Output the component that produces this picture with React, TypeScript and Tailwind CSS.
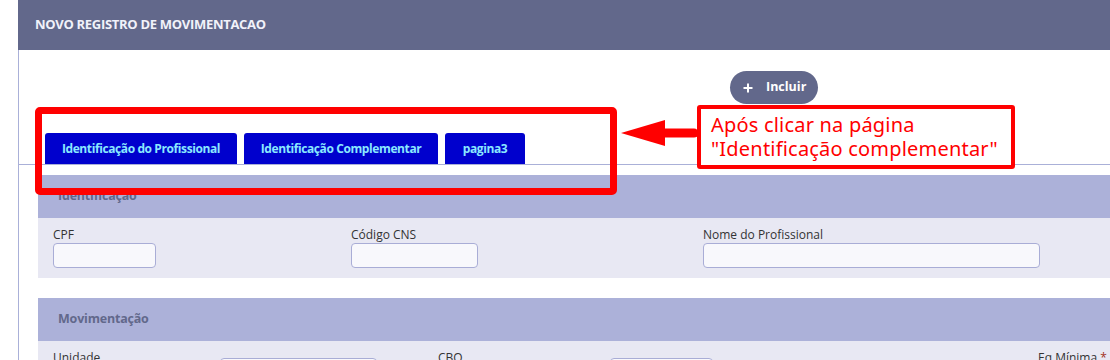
const identificacao = [
  { label: 'CPF', left: 'w-[298px]', input: 'w-[103px]' },
  { label: 'Código CNS', left: 'w-[352px]', input: 'w-[127px]' },
  { label: 'Nome do Profissional', left: 'w-[340px]', input: 'w-[337px]' },
]

const tabs = [
  { label: 'Identificação do Profissional', w: 'w-[192px]' },
  { label: 'Identificação Complementar', w: 'w-[194px]' },
  { label: 'pagina3', w: 'w-[80px]' },
]

export default function App() {
  return (
    <div className="relative h-[360px] w-[1110px] overflow-hidden bg-white font-['Open_Sans',sans-serif]">
      <div className="ml-[18px]">
        {/* Card header */}
        <div className="flex h-[50px] items-center bg-[#62688b] px-[17px]">
          <h1 className="text-[13px] font-bold tracking-[-0.3px] text-[#f1f2fa]">NOVO REGISTRO DE MOVIMENTACAO</h1>
        </div>

        <div className="h-[310px] border-l border-[#aab0d8]">
          {/* Incluir */}
          <div className="pt-[21px] pl-[711px]">
            <button className="flex h-[33px] w-[88px] items-center gap-[13px] rounded-full bg-[#62688b] pl-[13px] text-[12.5px] font-bold text-white">
              <svg viewBox="0 0 10 10" className="h-[10px] w-[10px]" aria-hidden="true">
                <path d="M5 0.5v9M0.5 5h9" stroke="white" strokeWidth="2" />
              </svg>
              Incluir
            </button>
          </div>

          {/* Tabs */}
          <div className="mt-[29px] flex gap-[7px] border-b border-[#aab0d8] pl-[26px]">
            {tabs.map((t) => (
              <div
                key={t.label}
                className={`flex h-[31px] ${t.w} items-center justify-center rounded-t-[3px] bg-[#0000cd] text-[12px] font-bold tracking-[-0.4px] text-[#8ae8ff]`}
              >
                {t.label}
              </div>
            ))}
          </div>

          {/* Identificação */}
          <section className="mt-[10px] ml-[19px]">
            <div className="flex h-[43px] items-center bg-[#acb1d9] px-[20px]">
              <h2 className="text-[12.5px] font-bold tracking-[-0.2px] text-[#62688b]">Identificação</h2>
            </div>
            <div className="flex h-[60px] bg-[#e8e8f3] pt-[9px] pl-[15px]">
              {identificacao.map((f) => (
                <div key={f.label} className={f.left}>
                  <label className="block text-[12px] leading-[16px] text-[#333]">{f.label}</label>
                  <div className={`h-[25px] ${f.input} rounded-[4px] border border-[#a9add6] bg-[#f8f8fc]`} />
                </div>
              ))}
            </div>
          </section>

          {/* Movimentação */}
          <section className="mt-[20px] ml-[19px]">
            <div className="flex h-[43px] items-center bg-[#acb1d9] px-[20px]">
              <h2 className="text-[12.5px] font-bold tracking-[-0.2px] text-[#62688b]">Movimentação</h2>
            </div>
            <div className="flex h-[60px] bg-[#e8e8f3] pt-[9px] pl-[15px] text-[12px] leading-[16px] text-[#333]">
              <span className="w-[167px]">Unidade</span>
              <div className="mt-[8px] h-[25px] w-[157px] rounded-[4px] border border-[#a9add6] bg-[#f8f8fc]" />
              <span className="ml-[61px] w-[172px]">CBO</span>
              <div className="mt-[8px] h-[25px] w-[103px] rounded-[4px] border border-[#a9add6] bg-[#f8f8fc]" />
              <span className="ml-[325px]">
                Eq Mínima <span className="text-[#a3321e]">*</span>
              </span>
            </div>
          </section>
        </div>
      </div>

      {/* Annotation overlay */}
      <div className="absolute left-[35px] top-[107px] h-[88px] w-[582px] rounded-[5px] border-[7px] border-[#ff0000]" />
      <svg className="absolute left-[618px] top-[117px] h-[32px] w-[80px]" viewBox="0 0 80 32" aria-hidden="true">
        <path d="M3 16 L47 3 L47 29 Z" fill="#ff0000" />
        <path d="M46 16 H76" stroke="#ff0000" strokeWidth="9" strokeLinecap="round" />
      </svg>
      <div className="absolute left-[697px] top-[105px] flex h-[64px] w-[318px] flex-col justify-center rounded-[3px] border-[4px] border-[#ff0000] bg-white pl-[10px] font-['Noto_Sans',sans-serif] text-[20px] leading-[24px] tracking-[0.2px] text-[#ff0000]">
        <span>Após clicar na página</span>
        <span>"Identificação complementar"</span>
      </div>
    </div>
  )
}
